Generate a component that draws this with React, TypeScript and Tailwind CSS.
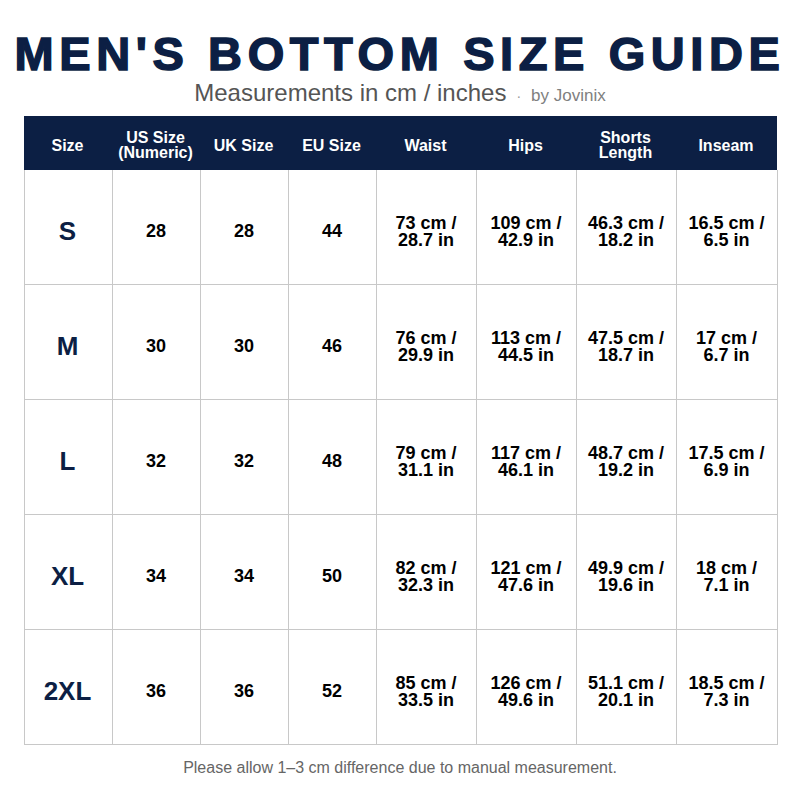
const headers = [
  ['Size'],
  ['US Size', '(Numeric)'],
  ['UK Size'],
  ['EU Size'],
  ['Waist'],
  ['Hips'],
  ['Shorts', 'Length'],
  ['Inseam'],
];

const rows = [
  ['S', '28', '28', '44', ['73 cm /', '28.7 in'], ['109 cm /', '42.9 in'], ['46.3 cm /', '18.2 in'], ['16.5 cm /', '6.5 in']],
  ['M', '30', '30', '46', ['76 cm /', '29.9 in'], ['113 cm /', '44.5 in'], ['47.5 cm /', '18.7 in'], ['17 cm /', '6.7 in']],
  ['L', '32', '32', '48', ['79 cm /', '31.1 in'], ['117 cm /', '46.1 in'], ['48.7 cm /', '19.2 in'], ['17.5 cm /', '6.9 in']],
  ['XL', '34', '34', '50', ['82 cm /', '32.3 in'], ['121 cm /', '47.6 in'], ['49.9 cm /', '19.6 in'], ['18 cm /', '7.1 in']],
  ['2XL', '36', '36', '52', ['85 cm /', '33.5 in'], ['126 cm /', '49.6 in'], ['51.1 cm /', '20.1 in'], ['18.5 cm /', '7.3 in']],
] as const;

const cols = 'grid grid-cols-[88px_88px_88px_88px_100px_100px_100px_101px]';

export default function App() {
  return (
    <div className="w-[800px] h-[800px] bg-white font-['Liberation_Sans',Arial,sans-serif] flex flex-col items-center">
      <h1 className="mt-[29px] text-[47px] leading-[50px] font-bold tracking-[5.6px] text-[#0c1f44] whitespace-nowrap [-webkit-text-stroke:1.5px_#0c1f44]">
        MEN'S BOTTOM SIZE GUIDE
      </h1>
      <div className="flex items-baseline leading-[28px] whitespace-nowrap">
        <span className="text-[24px] text-[#555555]">Measurements in cm / inches</span>
        <span className="mx-[10px] text-[14px] text-[#999999]">·</span>
        <span className="text-[17px] text-[#808080]">by Jovinix</span>
      </div>
      <div className="mt-[6px] w-[753px]">
        <div className={`${cols} bg-[#0c1f44] h-[54px]`}>
          {headers.map((h, i) => (
            <div
              key={i}
              className="flex flex-col items-center justify-center pt-[4px] text-white font-bold text-[16px] leading-[15px]"
            >
              {h.map((line) => (
                <span key={line}>{line}</span>
              ))}
            </div>
          ))}
        </div>
        <div className="border-l border-[#c8c8c8]">
          {rows.map((row, r) => (
            <div key={r} className={`${cols} h-[115px]`}>
              {row.map((cell, c) => (
                <div
                  key={c}
                  className={`flex flex-col items-center justify-center pt-[9px] border-r border-b border-[#c8c8c8] font-bold text-center ${
                    c === 0 ? '-ml-px text-[26px] text-[#0c1f44]' : 'text-[18px] leading-[17px] text-black'
                  }`}
                >
                  {typeof cell === 'string' ? cell : cell.map((line) => <span key={line}>{line}</span>)}
                </div>
              ))}
            </div>
          ))}
        </div>
      </div>
      <p className="mt-[13px] text-[16px] leading-[20px] text-[#666666]">
        Please allow 1–3 cm difference due to manual measurement.
      </p>
    </div>
  );
}
